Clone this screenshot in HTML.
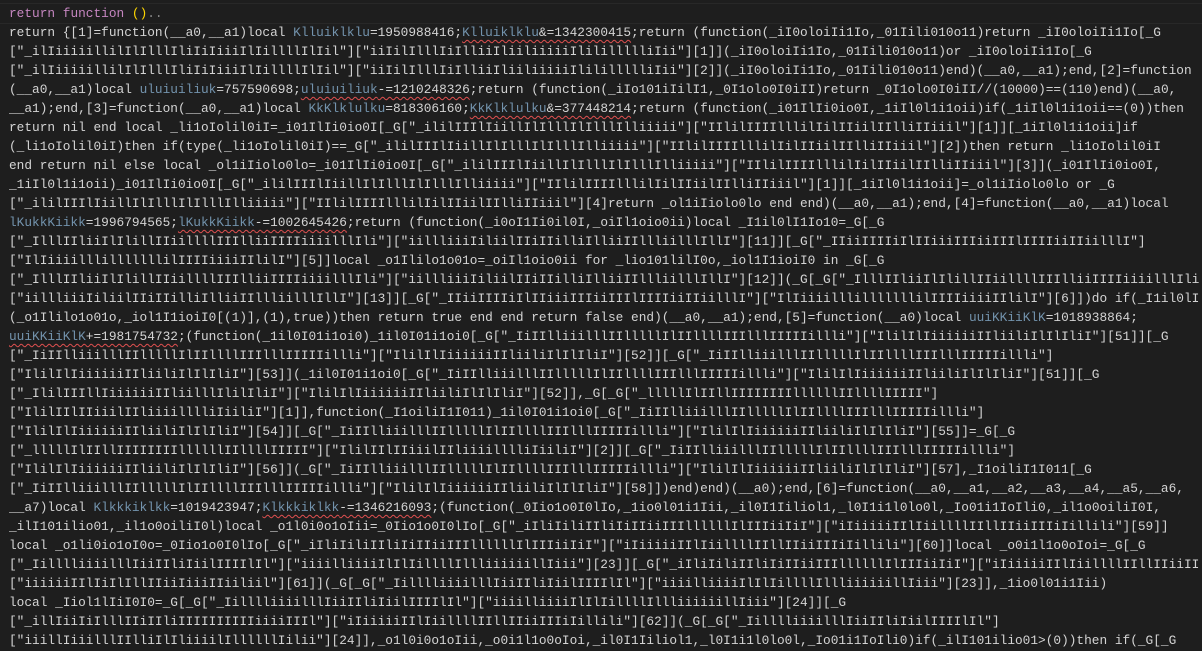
<!DOCTYPE html>
<html><head><meta charset="utf-8"><style>
html,body{margin:0;padding:0;background:#1e1e1e;width:1202px;height:651px;overflow:hidden}
.c{position:absolute;left:9px;top:4px;width:1190px;overflow:hidden;font-family:"Liberation Mono",monospace;font-size:12.8px;line-height:19px;color:#d4d4d4;white-space:pre}
.hl{position:absolute;left:0;top:3px;width:1202px;height:19px;border-top:1px solid #282828;border-bottom:1px solid #282828}
.k{color:#c586c0}.p{color:#ffd700}.v{color:#7393ad}.s{text-decoration:underline wavy #e05050;text-decoration-thickness:1px;text-underline-offset:3px}.d{color:#888}
</style></head><body>
<div class="hl"></div>
<div class="c"><span class="k">return</span> <span class="k">function</span> <span class="p">()</span><span class="d">..</span>
return {[1]=function(__a0,__a1)local <span class="v">Klluiklklu</span>=1950988416;<span class="s"><span class="v">Klluiklklu</span>&amp;=1342300415</span>;return (function(_iI0oloiIi1Io,_01Iili010o11)return _iI0oloiIi1Io[_G
["_ilIiiiiillilIlIlllIliIiIiiiIlIillllIlIil"]["iiIilIlllIiIlliiIliiliiiiiIlilillllliIii"][1]](_iI0oloiIi1Io,_01Iili010o11)or _iI0oloiIi1Io[_G
["_ilIiiiiillilIlIlllIliIiIiiiIlIillllIlIil"]["iiIilIlllIiIlliiIliiliiiiiIlilillllliIii"][2]](_iI0oloiIi1Io,_01Iili010o11)end)(__a0,__a1);end,[2]=function
(__a0,__a1)local <span class="v">uluiuiliuk</span>=757590698;<span class="s"><span class="v">uluiuiliuk</span>-=1210248326</span>;return (function(_iIo101iIilI1,_0I1olo0I0iII)return _0I1olo0I0iII//(10000)==(110)end)(__a0,
__a1);end,[3]=function(__a0,__a1)local <span class="v">KkKlklulku</span>=818306160;<span class="s"><span class="v">KkKlklulku</span>&amp;=377448214</span>;return (function(_i01IlIi0io0I,_1iIl0l1i1oii)if(_1iIl0l1i1oii==(0))then
return nil end local _li1oIolil0iI=_i01IlIi0io0I[_G["_ililIIIlIiillIlIlllIlIlllIlliiiii"]["IIlilIIIIlllilIilIIiilIIlliIIiiil"][1]][_1iIl0l1i1oii]if
(_li1oIolil0iI)then if(type(_li1oIolil0iI)==_G["_ililIIIlIiillIlIlllIlIlllIlliiiii"]["IIlilIIIIlllilIilIIiilIIlliIIiiil"][2])then return _li1oIolil0iI
end return nil else local _ol1iIiolo0lo=_i01IlIi0io0I[_G["_ililIIIlIiillIlIlllIlIlllIlliiiii"]["IIlilIIIIlllilIilIIiilIIlliIIiiil"][3]](_i01IlIi0io0I,
_1iIl0l1i1oii)_i01IlIi0io0I[_G["_ililIIIlIiillIlIlllIlIlllIlliiiii"]["IIlilIIIIlllilIilIIiilIIlliIIiiil"][1]][_1iIl0l1i1oii]=_ol1iIiolo0lo or _G
["_ililIIIlIiillIlIlllIlIlllIlliiiii"]["IIlilIIIIlllilIilIIiilIIlliIIiiil"][4]return _ol1iIiolo0lo end end)(__a0,__a1);end,[4]=function(__a0,__a1)local
<span class="v">lKukkKiikk</span>=1996794565;<span class="s"><span class="v">lKukkKiikk</span>-=1002645426</span>;return (function(_i0oI1Ii0il0I,_oiIl1oio0ii)local _I1il0lI1Io10=_G[_G
["_IlllIIliiIlIlillIIiillllIIIlliiIIIIiiiilllIli"]["iillliiiIiliilIIiIIilliIlliiIIllliilllIllI"][11]][_G["_IIiiIIIIiIlIIiiiIIIiiIIIlIIIIiiIIiilllI"]
["IlIiiiilllilllllllilIIIIiiiiIIlilI"][5]]local _o1Ililo1o01o=_oiIl1oio0ii for _lio101lilI0o,_iol1I1ioiI0 in _G[_G
["_IlllIIliiIlIlillIIiillllIIIlliiIIIIiiiilllIli"]["iillliiiIiliilIIiIIilliIlliiIIllliilllIllI"][12]](_G[_G["_IlllIIliiIlIlillIIiillllIIIlliiIIIIiiiilllIli"]
["iillliiiIiliilIIiIIilliIlliiIIllliilllIllI"][13]][_G["_IIiiIIIIiIlIIiiiIIIiiIIIlIIIIiiIIiilllI"]["IlIiiiilllilllllllilIIIIiiiiIIlilI"][6]])do if(_I1il0lI1Io10
(_o1Ililo1o01o,_iol1I1ioiI0[(1)],(1),true))then return true end end return false end)(__a0,__a1);end,[5]=function(__a0)local <span class="v">uuiKKiiKlK</span>=1018938864;
<span class="s"><span class="v">uuiKKiiKlK</span>+=1981754732</span>;(function(_1il0I01i1oi0)_1il0I01i1oi0[_G["_IiIIlliiilllIIlllllIlIIllllIIIlllIIIIIillli"]["IlilIlIiiiiiiIIliiliIlIlIliI"][51]][_G
["_IiIIlliiilllIIlllllIlIIllllIIIlllIIIIIillli"]["IlilIlIiiiiiiIIliiliIlIlIliI"][52]][_G["_IiIIlliiilllIIlllllIlIIllllIIIlllIIIIIillli"]
["IlilIlIiiiiiiIIliiliIlIlIliI"][53]](_1il0I01i1oi0[_G["_IiIIlliiilllIIlllllIlIIllllIIIlllIIIIIillli"]["IlilIlIiiiiiiIIliiliIlIlIliI"][51]][_G
["_IlilIIIllIiiiiiiIIliilllIlilIliI"]["IlilIlIiiiiiiIIliiliIlIlIliI"][52]],_G[_G["_lllllIlIIllIIIIIIIIllllllIIllllIIIII"]
["IlilIIlIIiiilIIliiiilllliIiiliI"][1]],function(_I1oiliI1I011)_1il0I01i1oi0[_G["_IiIIlliiilllIIlllllIlIIllllIIIlllIIIIIillli"]
["IlilIlIiiiiiiIIliiliIlIlIliI"][54]][_G["_IiIIlliiilllIIlllllIlIIllllIIIlllIIIIIillli"]["IlilIlIiiiiiiIIliiliIlIlIliI"][55]]=_G[_G
["_lllllIlIIllIIIIIIIIllllllIIllllIIIII"]["IlilIIlIIiiilIIliiiilllliIiiliI"][2]][_G["_IiIIlliiilllIIlllllIlIIllllIIIlllIIIIIillli"]
["IlilIlIiiiiiiIIliiliIlIlIliI"][56]](_G["_IiIIlliiilllIIlllllIlIIllllIIIlllIIIIIillli"]["IlilIlIiiiiiiIIliiliIlIlIliI"][57],_I1oiliI1I011[_G
["_IiIIlliiilllIIlllllIlIIllllIIIlllIIIIIillli"]["IlilIlIiiiiiiIIliiliIlIlIliI"][58]])end)end)(__a0);end,[6]=function(__a0,__a1,__a2,__a3,__a4,__a5,__a6,
__a7)local <span class="v">Klkkkiklkk</span>=1019423947;<span class="s"><span class="v">Klkkkiklkk</span>-=1346216093</span>;(function(_0Iio1o0I0lIo,_1io0l01i1Iii,_il0I1Iiliol1,_l0I1i1l0lo0l,_Io01i1IoIli0,_il1o0oiliI0I,
_ilI101ilio01,_il1o0oiliI0l)local _o1l0i0o1oIii=_0Iio1o0I0lIo[_G["_iIliIiliIIliIiIIiiIIIllllllIlIIIiiIiI"]["iIiiiiiIIlIiillllIIllIIiiIIIiIillili"][59]]
local _o1li0io1oI0o=_0Iio1o0I0lIo[_G["_iIliIiliIIliIiIIiiIIIllllllIlIIIiiIiI"]["iIiiiiiIIlIiillllIIllIIiiIIIiIillili"][60]]local _o0i1l1o0oIoi=_G[_G
["_IilllliiiilllIiiIIliIiilIIIIlIl"]["iiiilliiiiIlIlIillllIllliiiiiillIiii"][23]][_G["_iIliIiliIIliIiIIiiIIIllllllIlIIIiiIiI"]["iIiiiiiIIlIiillllIIllIIiiIIIiIillili"]
["iiiiiiIIlIiIlIllIIiiIiiiIIiiliil"][61]](_G[_G["_IilllliiiilllIiiIIliIiilIIIIlIl"]["iiiilliiiiIlIlIillllIllliiiiiillIiii"][23]],_1io0l01i1Iii)
local _Iiol1lIiI0I0=_G[_G["_IilllliiiilllIiiIIliIiilIIIIlIl"]["iiiilliiiiIlIlIillllIllliiiiiillIiii"][24]][_G
["_illIiiIiIlllIIiIIliIIIIIIIIIIiiiiIIIl"]["iIiiiiiIIlIiillllIIllIIiiIIIiIillili"][62]](_G[_G["_IilllliiiilllIiiIIliIiilIIIIlIl"]
["iiillIiiilllIIlliIlIliiiilIllllllIilii"][24]],_o1l0i0o1oIii,_o0i1l1o0oIoi,_il0I1Iiliol1,_l0I1i1l0lo0l,_Io01i1IoIli0)if(_ilI101ilio01&gt;(0))then if(_G[_G</div>
</body></html>
